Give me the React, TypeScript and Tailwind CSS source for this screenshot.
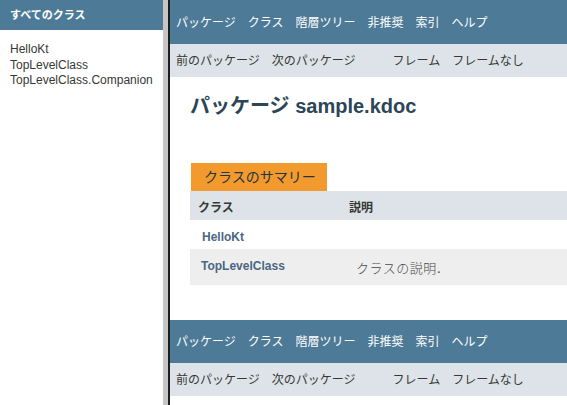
import React from "react";

const SANS = "font-['Liberation_Sans','Noto_Sans_CJK_JP',sans-serif]";

function TopNav() {
  const items = ["パッケージ", "クラス", "階層ツリー", "非推奨", "索引", "ヘルプ"];
  return (
    <div className="flex h-[43px] items-center bg-[#4D7A97] text-[12px] leading-[16px] text-white">
      {items.map((t) => (
        <span key={t} className="px-[6px]">
          {t}
        </span>
      ))}
    </div>
  );
}

function SubNav() {
  return (
    <div className="flex h-[33px] items-center bg-[#dee3e9] text-[12px] leading-[16px] text-[#353833]">
      <span className="px-[6px]">前のパッケージ</span>
      <span className="px-[6px]">次のパッケージ</span>
      <span className="ml-[25px] px-[6px]">フレーム</span>
      <span className="px-[6px]">フレームなし</span>
    </div>
  );
}

export default function App() {
  return (
    <div className={`flex h-[405px] w-[567px] overflow-hidden bg-white ${SANS}`}>
      {/* left frame */}
      <div className="flex w-[163px] shrink-0 flex-col bg-white">
        <div className="flex h-[30px] items-center bg-[#4D7A97] pl-[10px] text-[11px] font-bold leading-[14px] text-white">
          すべてのクラス
        </div>
        <div className="pl-[10px] pt-[12px] text-[12px] leading-[15.5px] text-[#353833]">
          <div>HelloKt</div>
          <div>TopLevelClass</div>
          <div>TopLevelClass.Companion</div>
        </div>
      </div>
      {/* frame border */}
      <div className="w-[5px] shrink-0 bg-[#c6c6c6]" />
      <div className="w-[2px] shrink-0 bg-[#1e1e1e]" />
      {/* right frame */}
      <div className="flex min-w-0 flex-1 flex-col">
        <div className="h-[1px] bg-[#4D7A97]" />
        <TopNav />
        <SubNav />
        <div className="px-[20px]">
          <h1 className="mt-[15px] h-[28px] text-[20px] font-bold leading-[28px] text-[#2c4557]">
            パッケージ sample.kdoc
          </h1>
          <div className="mt-[43px] ml-[1px] flex h-[28px] w-[136px] items-center bg-[#F29A2E] pl-[13px] text-[14px] leading-[18px] text-[#253441]">
            クラスのサマリー
          </div>
          <div className="mr-[-20px]">
            <div className="flex h-[29px] bg-[#dee3e9] pt-[4px] text-[12px] font-bold leading-[16px] text-[#353833]">
              <div className="flex w-[153px] items-center pl-[8px]">クラス</div>
              <div className="flex items-center pl-[6px]">説明</div>
            </div>
            <div className="flex h-[29px] bg-white pt-[5px] text-[12px] font-bold leading-[16px] text-[#4A6782]">
              <div className="flex w-[153px] items-center pl-[12px]">HelloKt</div>
            </div>
            <div className="flex h-[36px] items-start bg-[#eeeeef]">
              <div className="w-[153px] pl-[11px] pt-[9px] text-[12px] font-bold leading-[16px] text-[#4A6782]">
                TopLevelClass
              </div>
              <div className="pl-[13px] pt-[11px] text-[13px] font-light leading-[18px] tracking-[0.5px] text-[#474747] font-['DejaVu_Serif','Noto_Sans_CJK_JP',serif]">
                クラスの説明.
              </div>
            </div>
          </div>
        </div>
        <div className="mt-[35px]">
          <TopNav />
          <SubNav />
        </div>
      </div>
    </div>
  );
}
